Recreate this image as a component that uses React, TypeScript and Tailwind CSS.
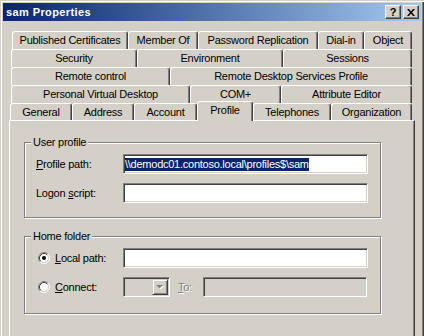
import React from 'react'

type TabDef = [string, string]

const rows: { offset: string; tabs: TabDef[] }[] = [
  {
    offset: 'ml-[9px]',
    tabs: [
      ['Published Certificates', 'w-[116px]'],
      ['Member Of', 'w-[70px]'],
      ['Password Replication', 'w-[120px]'],
      ['Dial-in', 'w-[46px]'],
      ['Object', 'w-[48px]'],
    ],
  },
  {
    offset: 'ml-[8px]',
    tabs: [
      ['Security', 'w-[126px]'],
      ['Environment', 'w-[146px]'],
      ['Sessions', 'w-[129px]'],
    ],
  },
  {
    offset: 'ml-[8px]',
    tabs: [
      ['Remote control', 'w-[159px]'],
      ['Remote Desktop Services Profile', 'w-[242px]'],
    ],
  },
  {
    offset: 'ml-[8px]',
    tabs: [
      ['Personal Virtual Desktop', 'w-[179px]'],
      ['COM+', 'w-[91px]'],
      ['Attribute Editor', 'w-[131px]'],
    ],
  },
]

const frontRow: TabDef[] = [
  ['General', 'w-[62px]'],
  ['Address', 'w-[62px]'],
  ['Account', 'w-[63px]'],
  ['Profile', 'w-[56px]'],
  ['Telephones', 'w-[78px]'],
  ['Organization', 'w-[81px]'],
]

function Tab({ label, w, h = 'h-[18px]', extra = '' }: { label: string; w: string; h?: string; extra?: string }) {
  return (
    <div
      className={`${w} ${h} ${extra} flex shrink-0 items-center justify-center rounded-t-[3px] border-l border-r border-t border-l-white border-r-[#404040] border-t-white bg-[#d4d0c8] shadow-[inset_-1px_0_0_#808080] whitespace-nowrap`}
    >
      {label}
    </div>
  )
}

function Field({ w, disabled = false, children }: { w: string; disabled?: boolean; children?: React.ReactNode }) {
  return (
    <div
      className={`${w} h-[20px] shrink-0 flex items-center overflow-hidden border border-b-white border-l-[#808080] border-r-white border-t-[#808080] pl-[1px] shadow-[inset_1px_1px_0_#404040,inset_-1px_-1px_0_#d4d0c8] ${disabled ? 'bg-[#d4d0c8]' : 'bg-white'}`}
    >
      {children}
    </div>
  )
}

function Radio({ checked }: { checked?: boolean }) {
  return (
    <svg width="12" height="12" viewBox="0 0 12 12" className="shrink-0">
      <circle cx="6" cy="6" r="4.5" fill="#fff" />
      <path d="M2.11 9.89 A5.5 5.5 0 0 1 9.89 2.11" fill="none" stroke="#808080" />
      <path d="M9.89 2.11 A5.5 5.5 0 0 1 2.11 9.89" fill="none" stroke="#fff" />
      <path d="M2.82 9.18 A4.5 4.5 0 0 1 9.18 2.82" fill="none" stroke="#404040" />
      <path d="M9.18 2.82 A4.5 4.5 0 0 1 2.82 9.18" fill="none" stroke="#d4d0c8" />
      {checked && <circle cx="6" cy="6" r="2" fill="#000" />}
    </svg>
  )
}

function GroupBox({ title, h, children }: { title: string; h: string; children: React.ReactNode }) {
  return (
    <div
      className={`relative ml-[14px] w-[357px] ${h} border border-[#808080] shadow-[1px_1px_0_#fff,inset_1px_1px_0_#fff] pl-[11px] pt-[11px]`}
    >
      <span className="absolute -top-[8px] left-[6px] bg-[#d4d0c8] px-[2px] leading-[14px]">{title}</span>
      {children}
    </div>
  )
}

export default function App() {
  return (
    <div className="h-[336px] w-[424px] overflow-hidden bg-[#d4d0c8] p-[3px] pb-0 font-['Liberation_Sans',Arial,sans-serif] text-[11px] tracking-[-0.25px] text-black shadow-[inset_1px_1px_0_#d4d0c8,inset_2px_2px_0_#fff,inset_-1px_0_0_#404040,inset_-2px_0_0_#808080]">
      {/* Title bar */}
      <div className="flex h-[18px] items-center justify-between bg-gradient-to-r from-[#0a246a] to-[#a6caf0] pl-[3px] pr-[2px]">
        <span className="font-bold tracking-[0.4px] text-white">sam Properties</span>
        <div className="flex gap-[2px]">
          <div className="flex h-[14px] w-[16px] items-center justify-center border border-b-[#404040] border-l-white border-r-[#404040] border-t-white bg-[#d4d0c8] text-[11px] font-bold leading-none tracking-normal shadow-[inset_-1px_-1px_0_#808080]">
            ?
          </div>
          <div className="flex h-[14px] w-[16px] items-center justify-center border border-b-[#404040] border-l-white border-r-[#404040] border-t-white bg-[#d4d0c8] shadow-[inset_-1px_-1px_0_#808080]">
            <svg width="8" height="7" viewBox="0 0 8 7">
              <path d="M0 0h2l2 2.5 2-2.5h2L5 3.5 8 7H6L4 4.5 2 7H0l3-3.5z" fill="#000" />
            </svg>
          </div>
        </div>
      </div>

      <div className="pt-[10px]">
        {rows.map((row, i) => (
          <div key={i} className={`flex h-[18px] ${row.offset}`}>
            {row.tabs.map(([label, w]) => (
              <Tab key={label} label={label} w={w} />
            ))}
          </div>
        ))}
        <div className="ml-[7px] flex h-[17px] items-start">
          {frontRow.map(([label, w]) =>
            label === 'Profile' ? (
              <Tab key={label} label={label} w={w} h="h-[20px]" extra="relative z-10 -mt-[2px] pb-[2px]" />
            ) : (
              <Tab key={label} label={label} w={w} h="h-[17px]" />
            )
          )}
        </div>

        {/* Tab page */}
        <div className="ml-[6px] h-[240px] w-[406px] border-l border-r border-t border-l-white border-r-[#404040] border-t-white shadow-[inset_-1px_0_0_#808080] pt-[21px]">
          <GroupBox title="User profile" h="h-[76px]">
            <div className="flex h-[20px] items-center">
              <span className="w-[87px] shrink-0">
                <span className="underline">P</span>rofile path:
              </span>
              <Field w="w-[245px]">
                <span className="inline-block bg-[#0a246a] leading-[13px] text-white">
                  {'\\\\demodc01.contoso.local\\profiles$\\sam'}
                </span>
              </Field>
            </div>
            <div className="mt-[9px] flex h-[20px] items-center">
              <span className="w-[87px] shrink-0">
                Logon <span className="underline">s</span>cript:
              </span>
              <Field w="w-[245px]" />
            </div>
          </GroupBox>

          <div className="h-[18px]" />

          <GroupBox title="Home folder" h="h-[78px]">
            <div className="flex h-[20px] items-center">
              <div className="ml-[2px] flex w-[85px] shrink-0 items-center gap-[5px]">
                <Radio checked />
                <span>
                  <span className="underline">L</span>ocal path:
                </span>
              </div>
              <Field w="w-[245px]" />
            </div>
            <div className="mt-[9px] flex h-[20px] items-center">
              <div className="ml-[2px] flex w-[85px] shrink-0 items-center gap-[5px]">
                <Radio />
                <span>
                  <span className="underline">C</span>onnect:
                </span>
              </div>
              <Field w="w-[47px]" disabled>
                <div className="ml-auto mr-[1px] flex h-[16px] w-[16px] items-center justify-center border border-b-[#404040] border-l-[#d4d0c8] border-r-[#404040] border-t-[#d4d0c8] shadow-[inset_1px_1px_0_#fff,inset_-1px_-1px_0_#808080]">
                  <svg width="8" height="5" viewBox="0 0 8 5">
                    <path d="M1 1h7L4.5 4.5z" fill="#fff" />
                    <path d="M0 0h7L3.5 3.5z" fill="#808080" />
                  </svg>
                </div>
              </Field>
              <span className="ml-[8px] w-[25px] shrink-0 text-[#808080] [text-shadow:1px_1px_0_#fff]">
                <span className="underline">T</span>o:
              </span>
              <Field w="w-[164px]" disabled />
            </div>
          </GroupBox>
        </div>
      </div>
    </div>
  )
}
